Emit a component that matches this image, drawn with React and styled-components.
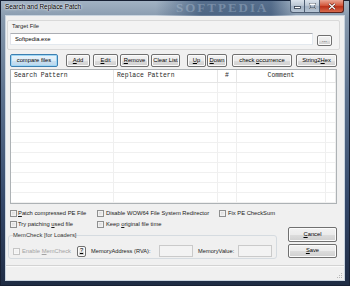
import React from "react";
import styled, { createGlobalStyle } from "styled-components";

const UI = '"Liberation Sans", Arial, sans-serif';
const MONO = '"Liberation Mono", "Courier New", monospace';
const COLS = "103px 104px 19px 89px 1fr";

const GlobalStyle = createGlobalStyle`
  html, body { margin: 0; padding: 0; background: #22314a; overflow: hidden; }
  body { font-family: ${UI}; }
  * { box-sizing: border-box; }
`;

const Window = styled.div`
  width: 350px;
  height: 286px;
  display: flex;
  flex-direction: column;
  padding: 0 6px 6px;
  background: linear-gradient(180deg, #a4b4c5 0px, #8799ad 18px, #5f7490 90px, #34486a 200px, #1f2c44 286px);
  box-shadow: inset 0 0 0 1px #172033;
`;

const TitleBar = styled.div`
  height: 16px;
  display: flex;
  align-items: flex-start;
  position: relative;
  background: linear-gradient(90deg, transparent 0, transparent 150px, rgba(25, 55, 95, 0.55) 195px, rgba(25, 55, 95, 0.55) 265px, transparent 290px);
`;

const Title = styled.span`
  margin: 3px 0 0 -1px;
  font: 6.4px/8px ${UI};
  color: #000;
  text-shadow: 0 0 3px #fff, 0 0 2px #fff;
  white-space: nowrap;
`;

const Watermark = styled.span`
  position: absolute;
  left: 170px;
  top: 0;
  font: bold 13px/15px "Liberation Serif", serif;
  letter-spacing: 2px;
  color: rgba(215, 228, 242, 0.28);
  pointer-events: none;
`;

const Caption = styled.div`
  margin-left: auto;
  display: flex;
  height: 13px;
  position: relative;
  z-index: 1;
`;

const CapBtn = styled.div`
  width: ${(p) => p.$w}px;
  height: 13px;
  display: flex;
  align-items: center;
  justify-content: center;
  border: 1px solid ${(p) => (p.$close ? "#5a221c" : "#4e5e73")};
  border-top: none;
  border-left-width: ${(p) => (p.$first ? 1 : 0)}px;
  border-radius: ${(p) => (p.$first ? "0 0 0 3px" : p.$close ? "0 0 3px 0" : "0")};
  background: ${(p) =>
    p.$close
      ? "linear-gradient(#e9a593, #d4593e 45%, #bb3119 55%, #d86a4d)"
      : "linear-gradient(#dbe3ec, #bcc8d5 45%, #a2b2c4 55%, #b8c6d5)"};
`;

const Client = styled.div`
  flex: 1;
  display: flex;
  flex-direction: column;
  background: #f0f0f0;
  box-shadow: 0 0 0 1px #c9d4df;
`;

const Group = styled.div`
  margin: 4px 4px 0 1px;
  height: 30px;
  border: 1px solid #d9d9d9;
  border-radius: 2px;
  padding: 1px 0 0 2px;
  background: #f3f3f3;
`;

const Label = styled.div`
  margin-left: 2px;
  height: 8px;
  font: 5.8px/8px ${UI};
  color: #1e1e1e;
`;

const Row = styled.div`
  display: flex;
  align-items: flex-start;
  margin-top: ${(p) => p.$mt || 0}px;
  padding-left: ${(p) => p.$pl || 0}px;
`;

const TextBox = styled.input`
  width: ${(p) => p.$w}px;
  height: 12px;
  margin: 0 0 0 ${(p) => p.$ml || 0}px;
  padding: 0 0 0 4px;
  border: 1px solid ${(p) => (p.$disabled ? "#cacaca" : "#abadb3")};
  border-color: ${(p) => (p.$disabled ? "#cacaca" : "#abadb3 #e3e9ef #e3e9ef #e2e3ea")};
  background: ${(p) => (p.$disabled ? "#f3f3f3" : "#fff")};
  font: 5.8px ${UI};
  color: #000;
  outline: none;
  flex: none;
`;

const Button = styled.button`
  flex: none;
  width: ${(p) => p.$w}px;
  height: ${(p) => p.$h || 13}px;
  margin: ${(p) => p.$mt || 0}px 0 0 ${(p) => p.$ml || 0}px;
  padding: 0;
  font: 5.8px/1 ${UI};
  color: #000;
  white-space: nowrap;
  border: 1px solid ${(p) => (p.$focus ? "#3c7fb1" : "#707070")};
  border-radius: 2px;
  background: ${(p) =>
    p.$focus
      ? "linear-gradient(#eaf4fb 0%, #dcecf7 50%, #c9e0f1 51%, #bcd7ec 100%)"
      : "linear-gradient(#f2f2f2 0%, #ebebeb 50%, #dddddd 51%, #cfcfcf 100%)"};
  box-shadow: inset 0 0 0 1px ${(p) => (p.$focus ? "#9fd7f5" : "#fbfbfb")};
`;

const Table = styled.div`
  margin: 2px 0 0 4px;
  width: 327px;
  height: 135px;
  border: 1px solid #adb2b5;
  background: #fff;
  overflow: hidden;
`;

const HeadRow = styled.div`
  display: grid;
  grid-template-columns: ${COLS};
  height: 13px;
  border-bottom: 1px solid #e5e5e5;
`;

const HeadCell = styled.div`
  border-right: 1px solid #e5e5e5;
  padding-left: ${(p) => (p.$center ? 0 : 3)}px;
  text-align: ${(p) => (p.$center ? "center" : "left")};
  font: 6.4px/12px ${MONO};
  color: #2a2a2a;
  white-space: nowrap;
`;

const BodyRow = styled.div`
  display: grid;
  grid-template-columns: ${COLS};
  height: 10px;
  border-bottom: 1px solid #f0f0f0;
`;

const BodyCell = styled.div`
  border-right: 1px solid #efefef;
`;

const Options = styled.div`
  display: grid;
  grid-template-columns: 1fr 49px;
  padding: 0 7px 0 4px;
`;

const CheckLine = styled.div`
  grid-column: ${(p) => (p.$full ? "1 / -1" : "auto")};
  display: grid;
  grid-template-columns: 87px 122px auto;
  align-items: center;
  height: 8px;
  margin-top: ${(p) => p.$mt}px;
`;

const Check = styled.label`
  display: flex;
  align-items: center;
  font: 5.8px/8px ${UI};
  color: ${(p) => (p.$disabled ? "#a3a3a3" : "#1a1a1a")};
  white-space: nowrap;
  width: ${(p) => (p.$w ? `${p.$w}px` : "auto")};
  flex: none;
`;

const Box = styled.span`
  width: 7px;
  height: 7px;
  margin-right: ${(p) => p.$gap || 1}px;
  border: 1px solid ${(p) => (p.$disabled ? "#c5c5c5" : "#8e8f8f")};
  background: ${(p) =>
    p.$disabled ? "#f2f2f2" : "linear-gradient(135deg, #d3d3d3, #f6f6f6)"};
  box-shadow: inset 0 0 0 1px ${(p) => (p.$disabled ? "#f7f7f7" : "#f1f1f1")};
  flex: none;
`;

const LeftCol = styled.div`
  display: flex;
  flex-direction: column;
`;

const RightCol = styled.div`
  display: flex;
  flex-direction: column;
`;

const MemGroup = styled.fieldset`
  margin: 3px 0 0 -2px;
  width: 269px;
  padding: 0 0 1px 4px;
  border: 1px solid #d5dbe0;
  border-radius: 3px;
  min-width: 0;
`;

const Legend = styled.legend`
  padding: 0;
  font: 5.8px/8px ${UI};
  color: #333;
`;

const MemRow = styled.div`
  display: flex;
  align-items: center;
  height: 12px;
  margin-top: 6px;
`;

const Text = styled.span`
  flex: none;
  width: ${(p) => p.$w}px;
  margin-left: ${(p) => p.$ml || 0}px;
  font: 5.7px/8px ${UI};
  color: #1a1a1a;
  white-space: nowrap;
`;

const StatusBar = styled.div`
  margin-top: auto;
  height: 15px;
  border-top: 1px solid #d3d3d3;
  box-shadow: inset 0 1px #fafafa;
  display: flex;
  justify-content: flex-end;
  align-items: flex-end;
  padding: 0 1px 1px 0;
`;

const Grip = () => (
  <svg width="6" height="6" viewBox="0 0 6 6">
    {[
      [5, 1],
      [3, 3],
      [5, 3],
      [1, 5],
      [3, 5],
      [5, 5],
    ].map(([x, y]) => (
      <rect key={`${x}${y}`} x={x - 1} y={y - 1} width="1" height="1" fill="#b8b8b8" />
    ))}
  </svg>
);

const MinGlyph = () => (
  <svg width="7" height="5" viewBox="0 0 7 5">
    <rect x="0.5" y="2.5" width="6" height="2" fill="#fff" stroke="#2e3a4a" strokeWidth="0.8" />
  </svg>
);

const MaxGlyph = () => (
  <svg width="7" height="6" viewBox="0 0 7 6">
    <rect x="0.7" y="0.7" width="5.6" height="4.6" fill="none" stroke="#2e3a4a" strokeWidth="1.4" />
    <rect x="0.7" y="0.7" width="5.6" height="4.6" fill="none" stroke="#fff" strokeWidth="0.6" />
    <rect x="1" y="1" width="5" height="1" fill="#fff" />
  </svg>
);

const CloseGlyph = () => (
  <svg width="8" height="7" viewBox="0 0 8 7">
    <path d="M1 0.8 L7 6.2 M7 0.8 L1 6.2" stroke="#5a1a12" strokeWidth="2.4" />
    <path d="M1 0.8 L7 6.2 M7 0.8 L1 6.2" stroke="#fff" strokeWidth="1.2" />
  </svg>
);

const headers = [
  { label: "Search Pattern" },
  { label: "Replace Pattern" },
  { label: "#", center: true },
  { label: "Comment", center: true },
  { label: "" },
];

const rows = Array.from({ length: 12 }, (_, i) => i);

export default function App() {
  return (
    <>
      <GlobalStyle />
      <Window>
        <TitleBar>
          <Title>Search and Replace Patch</Title>
          <Watermark>SOFTPEDIA</Watermark>
          <Caption>
            <CapBtn $w={15} $first>
              <MinGlyph />
            </CapBtn>
            <CapBtn $w={15}>
              <MaxGlyph />
            </CapBtn>
            <CapBtn $w={24} $close>
              <CloseGlyph />
            </CapBtn>
          </Caption>
        </TitleBar>

        <Client>
          <Group>
            <Label>Target File</Label>
            <Row $mt={3}>
              <TextBox $w={303} value="Softpedia.exe" readOnly />
              <Button $w={15} $h={11} $ml={4} $mt={2}>
                ...
              </Button>
            </Row>
          </Group>

          <Row $mt={4} $pl={4}>
            <Button $w={48} $focus>
              compare files
            </Button>
            <Button $w={24} $ml={8}>
              <u>A</u>dd
            </Button>
            <Button $w={25} $ml={3}>
              <u>E</u>dit
            </Button>
            <Button $w={29} $ml={2}>
              <u>R</u>emove
            </Button>
            <Button $w={29} $ml={2}>
              Clear List
            </Button>
            <Button $w={19} $ml={7}>
              <u>U</u>p
            </Button>
            <Button $w={20} $ml={1}>
              <u>D</u>own
            </Button>
            <Button $w={60} $ml={5}>
              check <u>o</u>ccurrence
            </Button>
            <Button $w={41} $ml={4}>
              String2<u>H</u>ex
            </Button>
          </Row>

          <Table>
            <HeadRow>
              {headers.map((h, i) => (
                <HeadCell key={i} $center={h.center}>
                  {h.label}
                </HeadCell>
              ))}
            </HeadRow>
            {rows.map((r) => (
              <BodyRow key={r}>
                {headers.map((_, i) => (
                  <BodyCell key={i} />
                ))}
              </BodyRow>
            ))}
          </Table>

          <Options>
            <CheckLine $full $mt={5}>
              <Check>
                <Box />
                <span>
                  <u>P</u>atch compressed PE File
                </span>
              </Check>
              <Check>
                <Box $gap={2} />
                <span>Disable WOW64 File System Redirector</span>
              </Check>
              <Check>
                <Box $gap={2} />
                <span>Fix PE CheckSum</span>
              </Check>
            </CheckLine>

            <LeftCol>
              <CheckLine $mt={3}>
                <Check>
                  <Box />
                  <span>
                    Try patching <u>u</u>sed file
                  </span>
                </Check>
                <Check>
                  <Box $gap={2} />
                  <span>
                    Keep <u>o</u>riginal file time
                  </span>
                </Check>
              </CheckLine>
              <MemGroup>
                <Legend>MemCheck [for Loaders]</Legend>
                <MemRow>
                  <Check $disabled $w={64}>
                    <Box $disabled $gap={2} />
                    <span>
                      Enable <u>M</u>emCheck
                    </span>
                  </Check>
                  <Button $w={9} $h={11}>
                    <u>?</u>
                  </Button>
                  <Text $w={68} $ml={5}>
                    MemoryAddress (RVA):
                  </Text>
                  <TextBox $w={34} $disabled readOnly />
                  <Text $w={40} $ml={5}>
                    MemoryValue:
                  </Text>
                  <TextBox $w={34} $disabled readOnly />
                </MemRow>
              </MemGroup>
            </LeftCol>

            <RightCol>
              <Button $w={49} $h={15} $mt={10}>
                <u>C</u>ancel
              </Button>
              <Button $w={49} $h={14} $mt={2}>
                <u>S</u>ave
              </Button>
            </RightCol>
          </Options>

          <StatusBar>
            <Grip />
          </StatusBar>
        </Client>
      </Window>
    </>
  );
}
